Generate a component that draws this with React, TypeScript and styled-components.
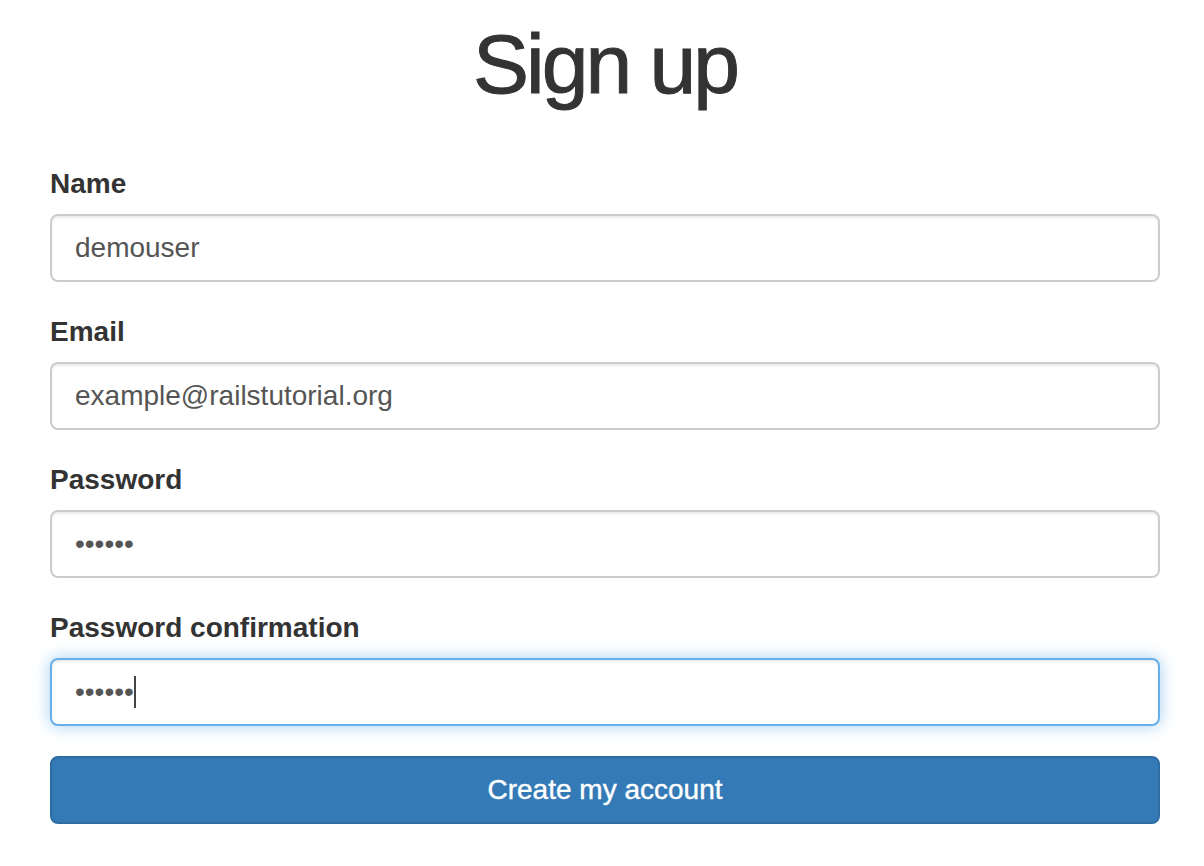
import React from "react";
import styled, { createGlobalStyle } from "styled-components";

const Global = createGlobalStyle`
  html, body { margin: 0; padding: 0; background: #fff; }
  body {
    font-family: "Liberation Sans", Arial, Helvetica, sans-serif;
    color: #333;
    -webkit-font-smoothing: antialiased;
  }
  * { box-sizing: border-box; }
`;

const Page = styled.div`
  width: 1204px;
  height: 866px;
  overflow: hidden;
  padding-left: 50px;
`;

const Column = styled.div`
  width: 1110px;
`;

const Title = styled.h1`
  margin: 18px 0 54px;
  font-size: 84px;
  line-height: 1.1;
  font-weight: 500;
  letter-spacing: -3px;
  text-align: center;
  color: #333;
  -webkit-text-stroke: 1px #333;
`;

const Form = styled.form`
  display: flex;
  flex-direction: column;
  gap: 30px;
`;

const Group = styled.div`
  display: flex;
  flex-direction: column;
`;

const Label = styled.label`
  display: block;
  font-size: 28px;
  line-height: 40px;
  font-weight: 700;
  margin-bottom: 10px;
  color: #333;
`;

const Field = styled.div`
  position: relative;
`;

const Input = styled.input<{ $focused?: boolean }>`
  display: block;
  width: 100%;
  height: 68px;
  padding: 12px 23px;
  font-family: "Liberation Sans", Arial, Helvetica, sans-serif;
  font-size: 28px;
  line-height: 40px;
  color: #555;
  background: #fff;
  border: 2px solid ${(p) => (p.$focused ? "#66afe9" : "#ccc")};
  border-radius: 8px;
  outline: none;
  caret-color: transparent;
  box-shadow: ${(p) =>
    p.$focused
      ? "inset 0 2px 2px rgba(0,0,0,.075), 0 0 16px rgba(102,175,233,.6)"
      : "inset 0 2px 2px rgba(0,0,0,.075)"};
`;

const Caret = styled.span`
  position: absolute;
  left: 84px;
  top: 18px;
  width: 2px;
  height: 32px;
  background: #444;
`;

const Button = styled.button`
  display: block;
  width: 100%;
  height: 68px;
  padding: 12px 24px;
  font-family: "Liberation Sans", Arial, Helvetica, sans-serif;
  font-size: 28px;
  line-height: 40px;
  color: #fff;
  background: #337ab7;
  border: 2px solid #2e6da4;
  border-radius: 8px;
  cursor: pointer;
  -webkit-text-stroke: 0.4px #fff;
`;

export default function App() {
  return (
    <>
      <Global />
      <Page>
        <Column>
          <Title>Sign up</Title>
          <Form onSubmit={(e) => e.preventDefault()}>
            <Group>
              <Label htmlFor="user_name">Name</Label>
              <Field>
                <Input id="user_name" type="text" defaultValue="demouser" />
              </Field>
            </Group>
            <Group>
              <Label htmlFor="user_email">Email</Label>
              <Field>
                <Input
                  id="user_email"
                  type="email"
                  defaultValue="example@railstutorial.org"
                />
              </Field>
            </Group>
            <Group>
              <Label htmlFor="user_password">Password</Label>
              <Field>
                <Input id="user_password" type="password" defaultValue="foobar" />
              </Field>
            </Group>
            <Group>
              <Label htmlFor="user_password_confirmation">
                Password confirmation
              </Label>
              <Field>
                <Input
                  id="user_password_confirmation"
                  type="password"
                  defaultValue="foobar"
                  $focused
                />
                <Caret />
              </Field>
            </Group>
            <Button type="submit">Create my account</Button>
          </Form>
        </Column>
      </Page>
    </>
  );
}
